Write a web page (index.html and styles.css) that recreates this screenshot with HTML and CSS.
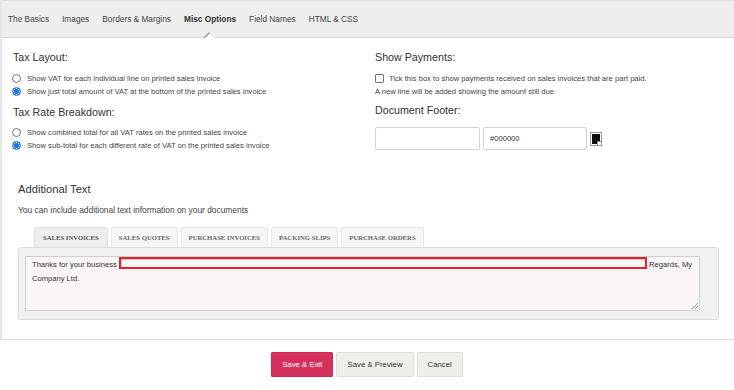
FILE: index.html
```html
<!DOCTYPE html>
<html lang="en">
<head>
    <meta charset="UTF-8">
    <meta name="viewport" content="width=device-width, initial-scale=1.0">
    <title>Document Settings - Misc Options</title>
    <link rel="stylesheet" href="styles.css">
</head>
<body>
    <div class="page">
        <!-- Settings tabs -->
        <nav class="nav">
            <a href="#">The Basics</a>
            <a href="#">Images</a>
            <a href="#">Borders &amp; Margins</a>
            <a href="#" class="active">Misc Options</a>
            <a href="#">Field Names</a>
            <a href="#">HTML &amp; CSS</a>
        </nav>

        <!-- Tax / payments / footer -->
        <section class="settings">
            <div class="col">
                <h2>Tax Layout:</h2>
                <label class="row"><input type="radio" name="layout"> Show VAT for each individual line on printed sales invoice</label>
                <label class="row"><input type="radio" name="layout" checked> Show just total amount of VAT at the bottom of the printed sales invoice</label>

                <h2 class="next">Tax Rate Breakdown:</h2>
                <label class="row"><input type="radio" name="rate"> Show combined total for all VAT rates on the printed sales invoice</label>
                <label class="row"><input type="radio" name="rate" checked> Show sub-total for each different rate of VAT on the printed sales invoice</label>
            </div>
            <div class="col">
                <h2>Show Payments:</h2>
                <label class="row check"><input type="checkbox"> Tick this box to show payments received on sales invoices that are part paid.</label>
                <p class="row">A new line will be added showing the amount still due</p>

                <h2 class="footer-title">Document Footer:</h2>
                <div class="footer-fields">
                    <input type="text" class="field">
                    <input type="text" class="field" value="#000000">
                    <span class="swatch"></span>
                </div>
            </div>
        </section>

        <!-- Additional text -->
        <section class="additional">
            <h2 class="big">Additional Text</h2>
            <p class="row intro">You can include additional text information on your documents</p>

            <div class="doc-tabs">
                <span class="doc-tab active">SALES INVOICES</span>
                <span class="doc-tab">SALES QUOTES</span>
                <span class="doc-tab">PURCHASE INVOICES</span>
                <span class="doc-tab">PACKING SLIPS</span>
                <span class="doc-tab">PURCHASE ORDERS</span>
            </div>
            <div class="panel">
                <div class="textarea">
                    <span>Thanks for your business</span>
                    <span class="inline-field"></span>
                    <span>Regards, My</span>
                    <span>Company Ltd.</span>
                    <span class="grip"></span>
                </div>
            </div>
        </section>
    </div>

    <div class="actions">
        <button class="btn primary">Save &amp; Exit</button>
        <button class="btn">Save &amp; Preview</button>
        <button class="btn">Cancel</button>
    </div>
</body>
</html>
```

FILE: styles.css
```css
* {
    margin: 0;
    padding: 0;
    box-sizing: border-box;
    font-family: 'Liberation Sans', Arial, sans-serif;
}

body {
    background-color: #fff;
    color: #444;
    font-size: 7.6px;
}

.page {
    border-left: 2px solid #e6e6e6;
}

/* top tabs */
.nav {
    display: flex;
    gap: 13px;
    height: 38px;
    align-items: center;
    padding: 0 0 1px 6px;
    background-color: #eeeeee;
    border-top: 1px solid #dcdcdc;
    border-bottom: 1px solid #dcdcdc;
}

.nav a {
    position: relative;
    color: #444;
    font-size: 8.3px;
    text-decoration: none;
}

.nav a.active {
    font-weight: bold;
    color: #333;
}

.nav a.active::after {
    content: "";
    position: absolute;
    left: 50%;
    bottom: -15px;
    margin-left: -6px;
    border-left: 6px solid transparent;
    border-right: 6px solid transparent;
    border-bottom: 6px solid #fff;
    filter: drop-shadow(-1px -0.5px 0 #999);
}

h2 {
    font-size: 10.7px;
    font-weight: normal;
    color: #333;
    line-height: 14px;
}

.row {
    display: flex;
    align-items: center;
    gap: 6px;
    line-height: 13px;
    color: #444;
}

.row.check {
    gap: 5px;
}

/* settings */
.settings {
    display: grid;
    grid-template-columns: 362px 1fr;
    padding: 12px 0 0 11px;
}

.settings h2 {
    margin-bottom: 8px;
}

.settings h2.next {
    margin-top: 7px;
    margin-bottom: 7px;
}

.settings h2.footer-title {
    margin-top: 5px;
    margin-bottom: 10px;
}

input[type="radio"] {
    appearance: none;
    width: 9px;
    height: 9px;
    margin-left: -1px;
    border: 1px solid #777;
    border-radius: 50%;
    background-color: #fff;
}

input[type="radio"]:checked {
    border-color: #1a73e8;
    background: radial-gradient(circle, #1a73e8 0 2.4px, #fff 2.6px 3px, #1a73e8 3.2px);
}

input[type="checkbox"] {
    appearance: none;
    width: 9px;
    height: 9px;
    border: 1px solid #777;
    border-radius: 1px;
    background-color: #fff;
}

.footer-fields {
    display: flex;
    align-items: center;
    gap: 3px;
}

.field {
    width: 105px;
    height: 23px;
    padding: 0 6px;
    border: 1px solid #d4d4d4;
    border-radius: 2px;
    font-size: 7.6px;
    color: #333;
}

.field + .field {
    width: 104px;
}

.swatch {
    position: relative;
    width: 12px;
    height: 14px;
    border: 1px solid #999;
    background-color: #111;
    box-shadow: inset 0 0 0 1px #fff;
}

.swatch::after {
    content: "";
    position: absolute;
    right: 0;
    bottom: 0;
    width: 3px;
    height: 3px;
    background-color: #fff;
    border-left: 1px solid #888;
    border-top: 1px solid #888;
}

/* additional text */
.additional {
    padding: 30px 15px 19px 16px;
}

.additional h2.big {
    font-size: 11.2px;
    margin-bottom: 8px;
}

.row.intro {
    font-size: 8.4px;
}

.doc-tabs {
    display: flex;
    gap: 3px;
    margin: 10px 0 0 16px;
}

.doc-tab {
    height: 20px;
    line-height: 19px;
    padding: 0 7px;
    font-family: 'Liberation Serif', 'Times New Roman', serif;
    font-size: 6.7px;
    font-weight: bold;
    color: #6a6a6a;
    background-color: #f6f6f6;
    border: 1px solid #e8e8e8;
    border-bottom: none;
    border-radius: 3px 3px 0 0;
}

.doc-tab.active {
    padding: 0 8px;
    background-color: #eeeeee;
    border-color: #e0e0e0;
    color: #555;
}

.panel {
    padding: 8px 18px 8px 6px;
    background-color: #f1f1f1;
    border: 1px solid #dcdcdc;
    border-radius: 3px;
}

.textarea {
    position: relative;
    height: 55px;
    padding: 0 2px 0 6px;
    line-height: 14px;
    color: #333;
    background-color: #fcf5f7;
    border: 1px solid #cfcfcf;
}

.inline-field {
    display: inline-block;
    width: 528px;
    height: 12px;
    vertical-align: -2px;
    border: 2px solid #e3222b;
    background-color: #fcf5f7;
    box-shadow: inset 1px 1px 0 #ccc;
}

.grip {
    position: absolute;
    right: 1px;
    bottom: 1px;
    width: 6px;
    height: 6px;
    background: linear-gradient(135deg, transparent 45%, #999 45% 55%, transparent 55% 70%, #999 70% 80%, transparent 80%);
}

/* buttons */
.actions {
    display: flex;
    justify-content: center;
    gap: 3px;
    padding-top: 12px;
    border-top: 1px solid #dcdcdc;
}

.btn {
    height: 25px;
    padding: 0 10px;
    font-size: 7.8px;
    color: #333;
    background-color: #efefe9;
    border: 1px solid #e0e0da;
    border-radius: 1px;
}

.btn.primary {
    color: #fff;
    background-color: #d6305f;
    border-color: #c92d58;
}
```
